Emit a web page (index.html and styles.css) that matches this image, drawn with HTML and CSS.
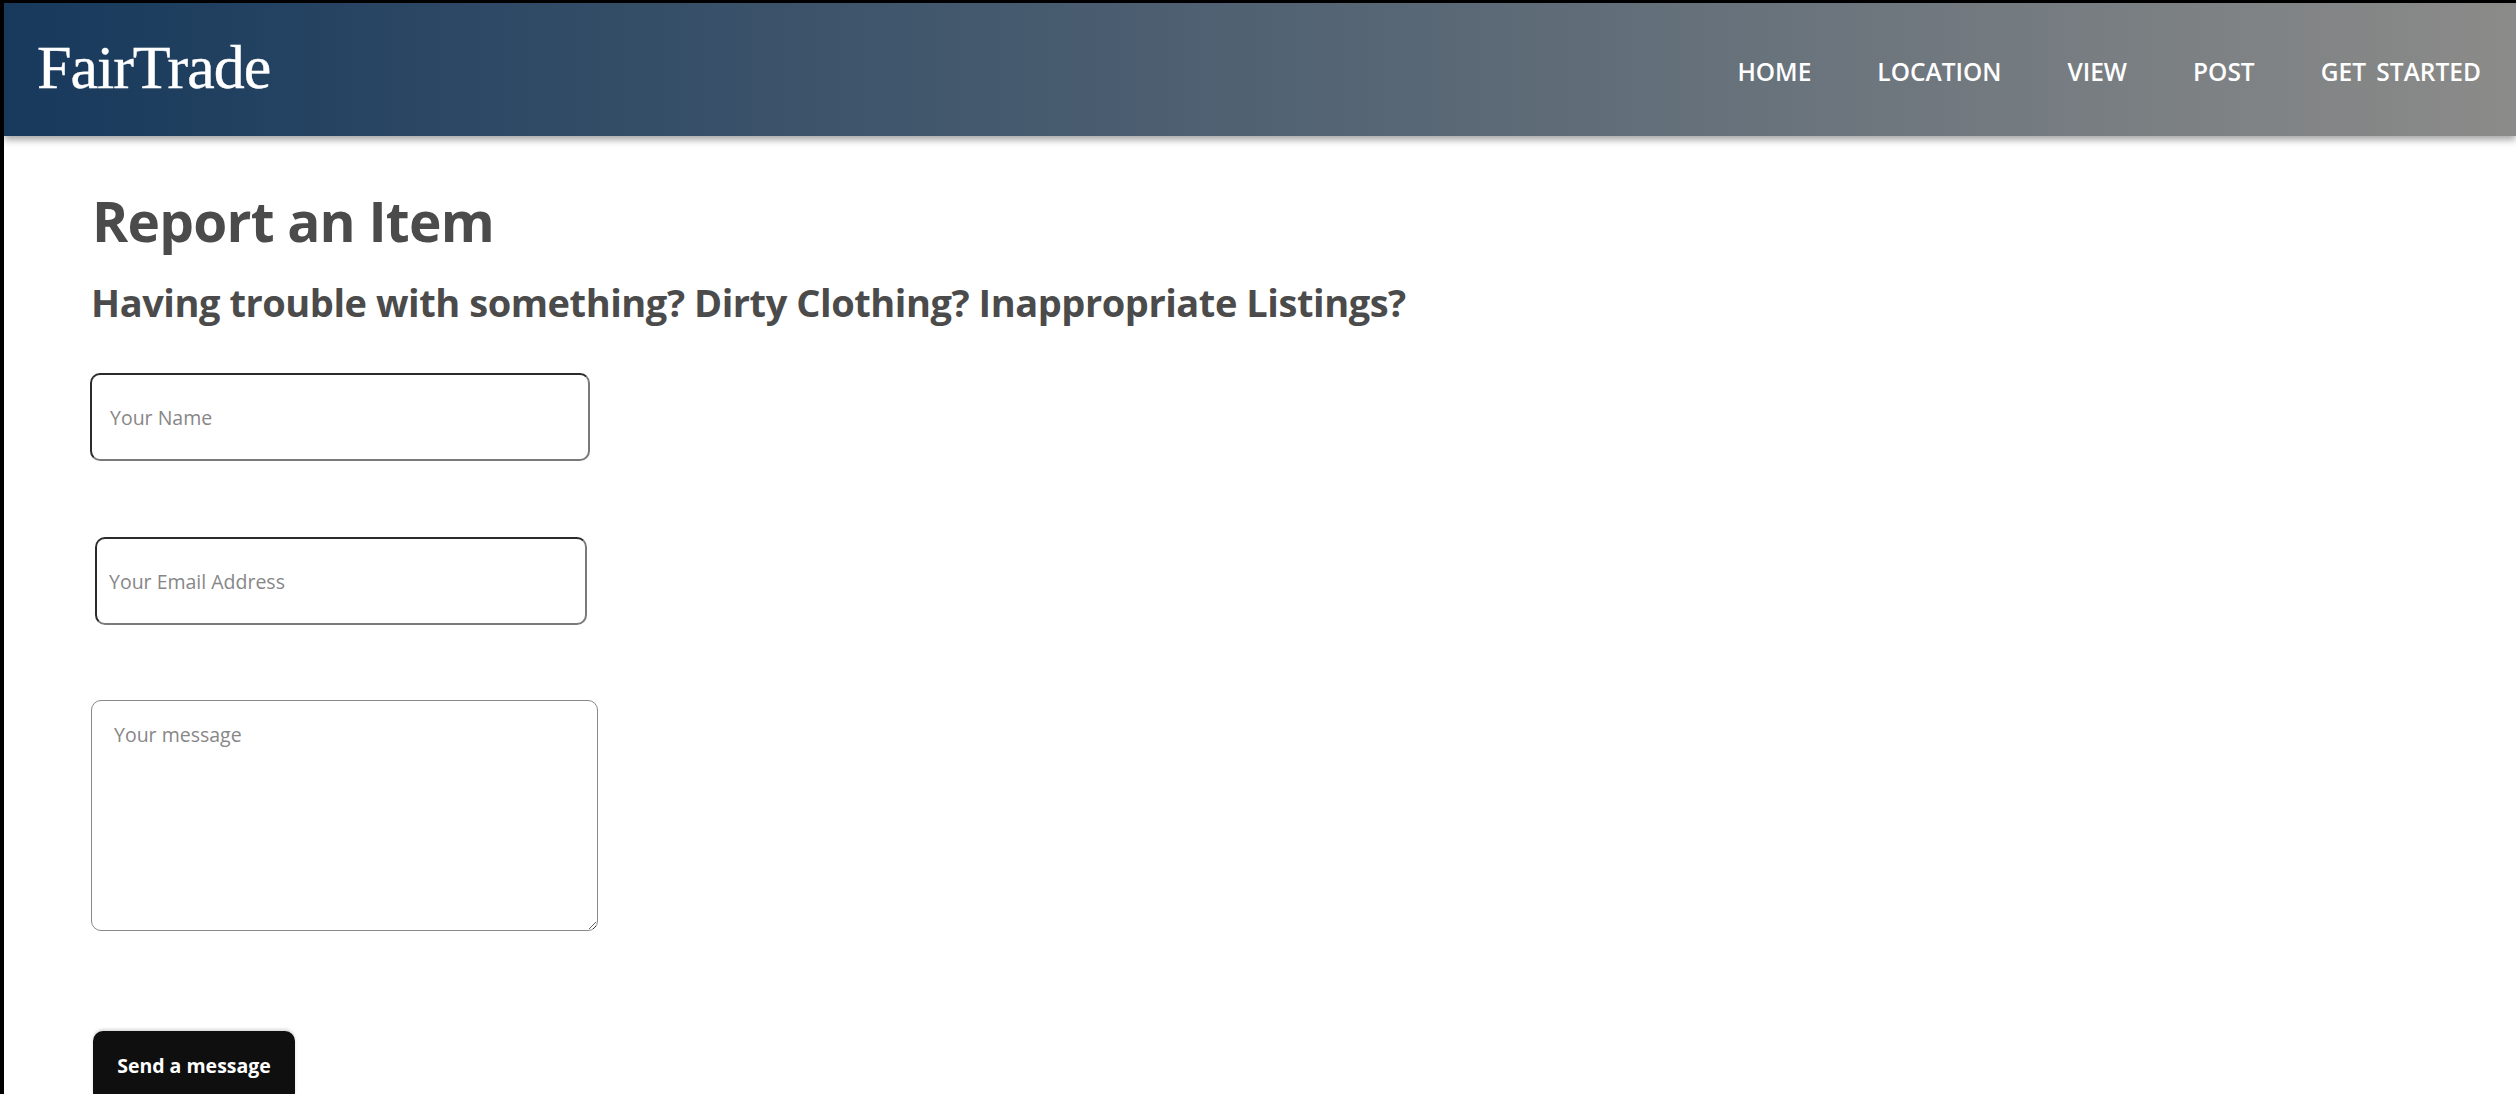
FILE: index.html
```html
<!DOCTYPE html>
<html lang="en">
<head>
<meta charset="utf-8">
<title>FairTrade - Report an Item</title>
<link rel="stylesheet" href="styles.css">
</head>
<body>
<div class="frame">
  <header class="site-header">
    <a class="logo" href="#">FairTrade</a>
    <nav class="nav">
      <a href="#">HOME</a>
      <a href="#">LOCATION</a>
      <a href="#">VIEW</a>
      <a href="#">POST</a>
      <a href="#">GET STARTED</a>
    </nav>
  </header>
  <main class="content">
    <h1 class="title">Report an Item</h1>
    <h2 class="subtitle">Having trouble with something? Dirty Clothing? Inappropriate Listings?</h2>
    <form class="report-form">
      <input class="field field-name" type="text" placeholder="Your Name">
      <input class="field field-email" type="email" placeholder="Your Email Address">
      <textarea class="field-message" placeholder="Your message"></textarea>
      <button class="send-btn" type="button">Send a message</button>
    </form>
  </main>
</div>
</body>
</html>
```

FILE: styles.css
```css
* { box-sizing: border-box; }

html, body {
  margin: 0;
  padding: 0;
  background: #000;
  overflow: hidden;
}

body {
  font-family: "Open Sans", "DejaVu Sans", sans-serif;
}

.frame {
  border-left: 4px solid #000;
  border-top: 3px solid #000;
  background: #fff;
  min-height: 100vh;
}

.site-header {
  position: relative;
  z-index: 1;
  height: 133px;
  display: flex;
  align-items: center;
  justify-content: space-between;
  padding: 0 35px 0 33px;
  background: linear-gradient(to right, #17395c 0%, #8b8b89 100%);
  box-shadow: 0 4px 7px rgba(0, 0, 0, 0.35);
}

.logo {
  font-family: "Liberation Serif", "Times New Roman", serif;
  font-size: 62px;
  color: #fff;
  text-decoration: none;
  letter-spacing: -1px;
  margin-top: -4px;
  -webkit-text-stroke: 0.4px #fff;
}

.nav {
  display: flex;
  gap: 66px;
  margin-top: 3px;
}

.nav a {
  color: #fff;
  text-decoration: none;
  font-size: 24.5px;
  font-weight: 600;
  word-spacing: 4px;
}

.content {
  padding: 51px 0 0 89px;
}

.title {
  margin: 0 0 0 -1px;
  font-size: 55px;
  line-height: 67px;
  font-weight: 700;
  letter-spacing: -0.8px;
  color: #4b4b4b;
}

.subtitle {
  margin: 25px 0 0 -2px;
  font-size: 38px;
  line-height: 46px;
  font-weight: 700;
  letter-spacing: -0.45px;
  color: #4b4b4b;
}

.report-form {
  display: flex;
  flex-direction: column;
  align-items: flex-start;
  margin: 48px 0 0 -3px;
}

.field {
  font-family: "Open Sans", "DejaVu Sans", sans-serif;
  font-size: 19.5px;
  height: 88px;
  border: 2px solid;
  border-color: #2b2b2b #7a7a7a #7a7a7a #2b2b2b;
  border-radius: 10px;
  background: #fff;
  color: #333;
  outline: none;
}

.field::placeholder,
.field-message::placeholder {
  color: #878787;
}

.field-name {
  width: 500px;
  padding: 0 18px;
}

.field-email {
  width: 492px;
  margin: 76px 0 0 5px;
  padding: 0 12px;
}

.field-message {
  width: 507px;
  height: 231px;
  margin: 75px 0 0 1px;
  padding: 20px 22px;
  font-family: "Open Sans", "DejaVu Sans", sans-serif;
  font-size: 19.5px;
  border: 1.5px solid #888;
  border-radius: 10px;
  outline: none;
}

.send-btn {
  margin: 100px 0 0 3px;
  width: 202px;
  height: 72px;
  background: #0f0f0f;
  color: #fff;
  border: none;
  border-radius: 10px;
  box-shadow: 0 -2px 3px rgba(0, 0, 0, 0.15);
  font-family: "Open Sans", "DejaVu Sans", sans-serif;
  font-weight: 700;
  font-size: 19.5px;
  padding: 0 0 4px;
}
```
